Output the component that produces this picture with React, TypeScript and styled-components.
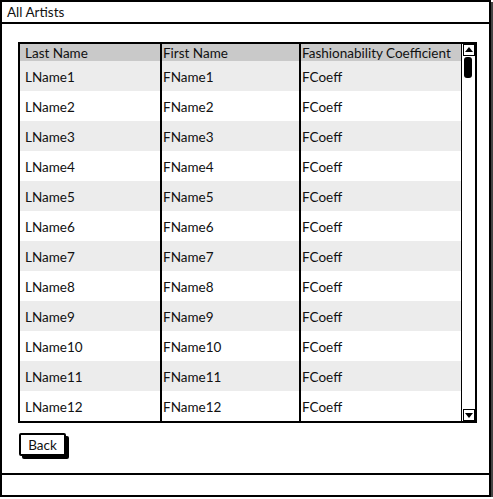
import { Fragment } from 'react'
import styled, { createGlobalStyle } from 'styled-components'

const GlobalStyle = createGlobalStyle`
  html, body {
    margin: 0;
    padding: 0;
    background: #ffffff;
  }
  body {
    font-family: 'Lato', 'Noto Sans', sans-serif;
    font-size: 13.5px;
    color: #111111;
  }
`

const Window = styled.div`
  display: flex;
  flex-direction: column;
  width: 487px;
  height: 493px;
  border: 2px solid #000;
  box-shadow: 2px 2px 0 #444;
  background: #fff;
`

const TitleBar = styled.div`
  display: flex;
  align-items: center;
  height: 20px;
  padding-left: 5px;
  border-bottom: 2px solid #000;
`

const Content = styled.div`
  flex: 1;
  display: flex;
  flex-direction: column;
  align-items: flex-start;
  padding: 18px 0 0 16px;
`

const TableFrame = styled.div`
  display: flex;
  width: 455px;
  height: 377px;
  border: 2px solid #000;
`

const Grid = styled.div`
  flex: 1;
  display: grid;
  grid-template-columns: 140px 2px 137px 2px 1fr;
  grid-template-rows: 17px repeat(12, 30px);
`

const Cell = styled.div<{ $header?: boolean; $shade?: boolean }>`
  display: flex;
  align-items: center;
  padding-left: 5px;
  padding-top: ${(p) => (p.$header ? '0' : '2px')};
  white-space: nowrap;
  overflow: hidden;
  background: ${(p) => (p.$header ? '#c9c9c9' : p.$shade ? '#ececec' : '#ffffff')};
`

const InnerCell = styled(Cell)`
  padding-left: 1px;
`

const Divider = styled.div`
  background: #000;
`

const ScrollBar = styled.div`
  position: relative;
  width: 13px;
  border-left: 1px solid #000;
  background: #fff;
`

const ArrowBox = styled.div<{ $bottom?: boolean }>`
  position: absolute;
  left: 1px;
  ${(p) => (p.$bottom ? 'bottom: 0;' : 'top: 0;')}
  width: 10px;
  height: 10px;
  border: 1px solid #000;
  background: #fff;
  display: flex;
  align-items: center;
  justify-content: center;
`

const Thumb = styled.div`
  position: absolute;
  left: 2px;
  top: 13px;
  width: 8px;
  height: 21px;
  border-radius: 3px;
  background: #000;
`

const BackButton = styled.button`
  margin: 10px 0 0 1px;
  width: 47px;
  height: 23px;
  padding: 0;
  border: 2px solid #000;
  border-radius: 2px;
  background: #fff;
  box-shadow: 3px 3px 0 #000;
  font-family: 'Lato', 'Noto Sans', sans-serif;
  font-size: 13.5px;
  color: #111;
`

const StatusBar = styled.div`
  height: 20px;
  border-top: 2px solid #000;
`

const rows = Array.from({ length: 12 }, (_, i) => i + 1)

const Arrow = ({ down }: { down?: boolean }) => (
  <svg width="8" height="6" viewBox="0 0 8 6">
    <polygon points={down ? '0,1 8,1 4,6' : '0,5 8,5 4,0'} fill="#000" />
  </svg>
)

export default function App() {
  return (
    <>
      <GlobalStyle />
      <Window>
        <TitleBar>All Artists</TitleBar>
        <Content>
          <TableFrame>
            <Grid>
              <Cell $header>Last Name</Cell>
              <Divider />
              <InnerCell $header>First Name</InnerCell>
              <Divider />
              <InnerCell $header>Fashionability Coefficient</InnerCell>
              {rows.map((n) => (
                <Fragment key={n}>
                  <Cell $shade={n % 2 === 1}>LName{n}</Cell>
                  <Divider />
                  <InnerCell $shade={n % 2 === 1}>FName{n}</InnerCell>
                  <Divider />
                  <InnerCell $shade={n % 2 === 1}>FCoeff</InnerCell>
                </Fragment>
              ))}
            </Grid>
            <ScrollBar>
              <ArrowBox><Arrow /></ArrowBox>
              <Thumb />
              <ArrowBox $bottom><Arrow down /></ArrowBox>
            </ScrollBar>
          </TableFrame>
          <BackButton>Back</BackButton>
        </Content>
        <StatusBar />
      </Window>
    </>
  )
}
